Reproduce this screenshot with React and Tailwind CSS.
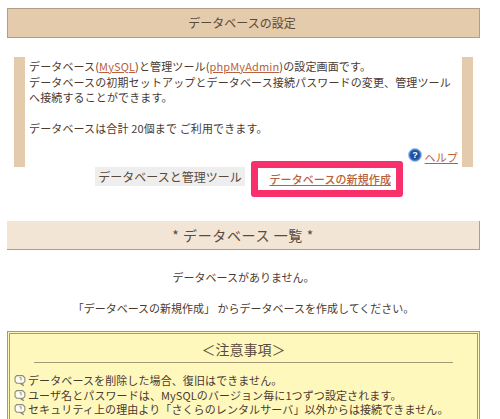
function Bubble() {
  return (
    <svg width="13" height="13" viewBox="0 0 12 12" className="shrink-0" fill="none">
      <path d="M2.5 1.5h5.5l2 2v3.5l-1.5 1.5h-1.5l2 2.5-3.5-2.5h-3l-1.5-1.5v-4z" stroke="#8b8b80" strokeWidth="1" fill="#fffdf0" />
      <path d="M5 3.5h1.5v2.5" stroke="#a09a80" strokeWidth="1" />
    </svg>
  );
}
function Note({ children }) {
  return (
    <div className="flex items-center gap-[1px] h-[14.7px] whitespace-nowrap tracking-[0.1px]">
      <Bubble />
      <span>{children}</span>
    </div>
  );
}
export default function App() {
  return (
    <div className="w-[500px] h-[419px] overflow-hidden bg-white font-['Noto_Sans_CJK_JP',sans-serif] text-[11px] text-[#4a3a32]">
      <div className="ml-[7px] w-[473px] pt-[8px]">
        <div className="h-[30px] flex items-center justify-center border border-[#b19e84] bg-[#e3cbab] text-[12px] text-[#5a4a3c] pr-[3px]">
          データベースの設定
        </div>
        <div className="relative mt-[19px] mx-[7px] h-[110px] border-x-[11px] border-[#e3cbab] pt-[2px] pl-[4px] leading-[15.6px] tracking-[0.13px]">
          <p>データベース(<a className="underline text-[#b8623c]">MySQL</a>)と管理ツール(<a className="underline text-[#b8623c]">phpMyAdmin</a>)の設定画面です。</p>
          <p>データベースの初期セットアップとデータベース接続パスワードの変更、管理ツール</p>
          <p>へ接続することができます。</p>
          <p className="mt-[15.6px]">データベースは合計 20個まで ご利用できます。</p>
          <div className="absolute right-[4px] bottom-[1px] flex items-center gap-[3px]">
            <svg width="14" height="14" viewBox="0 0 14 14" className="-mt-[6px]">
              <circle cx="7" cy="7" r="6.5" fill="#3f78c8" stroke="#a9c6ea" />
              <circle cx="7" cy="7" r="4.8" fill="#1d4ea0" />
              <text x="7" y="10" textAnchor="middle" fontSize="9" fontWeight="700" fill="#fff" fontFamily="Liberation Sans">?</text>
            </svg>
            <a className="underline text-[#b8623c]">ヘルプ</a>
          </div>
        </div>
        <div className="flex -mt-[1px] ml-[88px] items-start">
          <div className="mt-[1px] h-[19px] w-[150px] bg-[#eeeeee] flex items-center justify-center text-[12px] text-[#5a4a3c]">データベースと管理ツール</div>
          <div className="ml-[6px] -mt-[5px] h-[36px] w-[152px] border-[7px] border-[#f8306c] rounded-[3px] bg-white flex items-center justify-end pr-[5px] text-[11px] font-medium tracking-[0.1px]">
            <a className="underline text-[#b8623c]">データベースの新規作成</a>
          </div>
        </div>
        <div className="mt-[24px] h-[29px] flex items-center justify-center bg-[#f2e5d5] border-b border-r border-[#b19e84] text-[14px] text-[#5a4a3c] tracking-[0.6px]">
          * データベース 一覧 *
        </div>
        <p className="mt-[19px] text-center">データベースがありません。</p>
        <p className="mt-[14px] text-center">「データベースの新規作成」 からデータベースを作成してください。</p>
        <div className="mt-[15px] h-[100px] border-[3px] border-double border-[#a8987a] bg-[#fff8bc] px-[4px]">
          <div className="mx-[20px] h-[29px] pt-[3px] border-b border-[#a8987a] flex items-center justify-center text-[14px] text-[#5a4a3c]">
            ＜注意事項＞
          </div>
          <div className="mt-[10px] leading-[15px]">
            <Note>データベースを削除した場合、復旧はできません。</Note>
            <Note>ユーザ名とパスワードは、MySQLのバージョン毎に1つずつ設定されます。</Note>
            <Note>セキュリティ上の理由より「さくらのレンタルサーバ」以外からは接続できません。</Note>
            <Note>&nbsp;</Note>
          </div>
        </div>
      </div>
    </div>
  );
}
